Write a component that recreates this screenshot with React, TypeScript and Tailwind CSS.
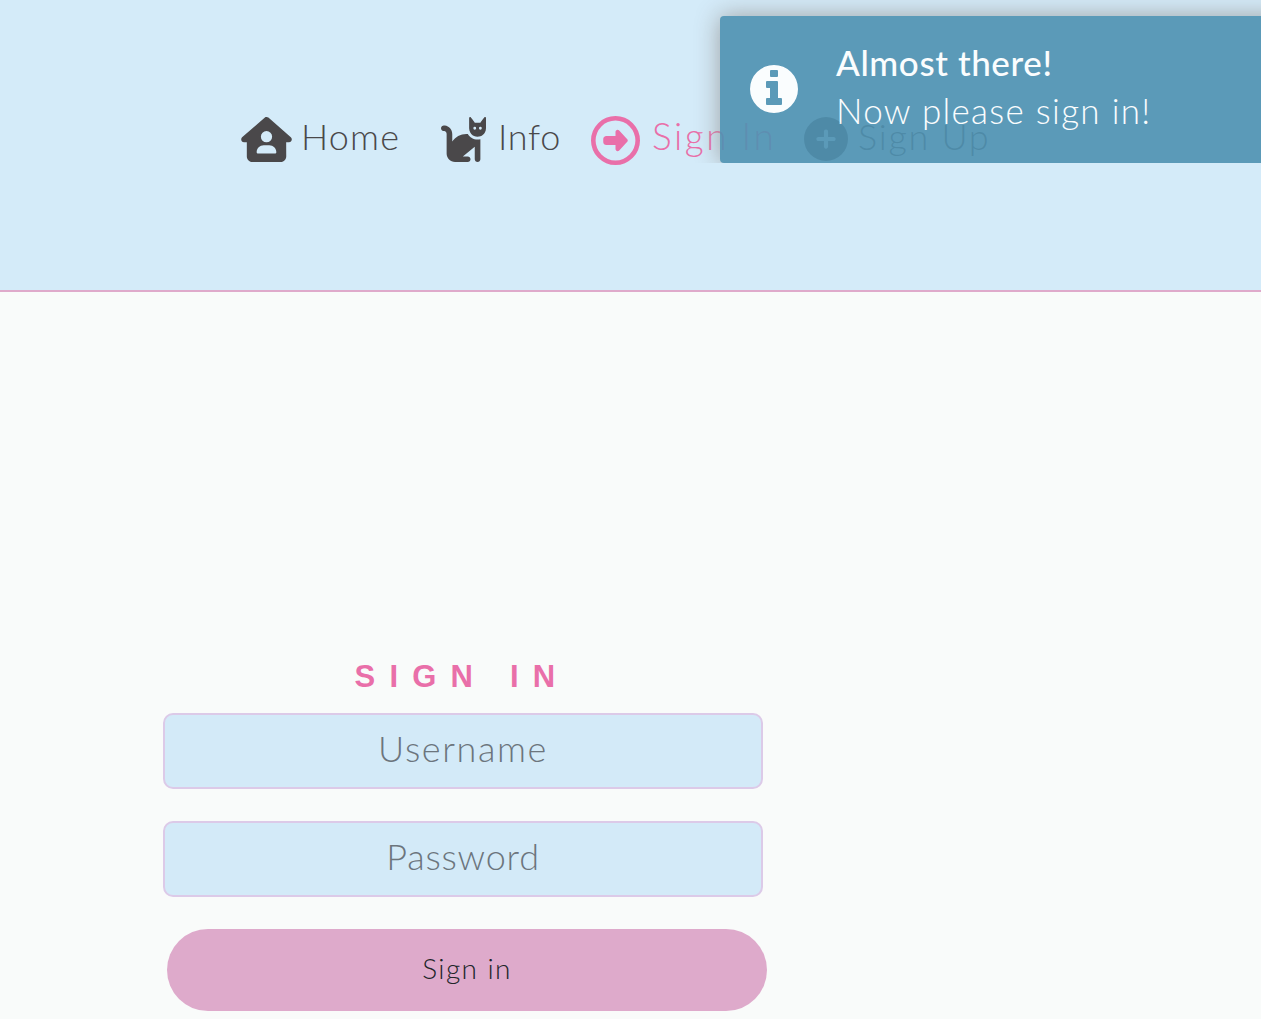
import { FaCat, FaCirclePlus, FaHouseUser, FaRegCircleRight } from "react-icons/fa6";

function InfoIcon({ className }: { className?: string }) {
  return (
    <svg viewBox="0 0 48 48" className={className} fill="currentColor">
      <path
        fillRule="evenodd"
        d="M24 0a24 24 0 1 0 0 48a24 24 0 1 0 0-48ZM21 5h6a1 1 0 0 1 1 1v5a1 1 0 0 1-1 1h-6a1 1 0 0 1-1-1v-5a1 1 0 0 1 1-1ZM17 16h10a1 1 0 0 1 1 1v16h3a1 1 0 0 1 1 1v5a1 1 0 0 1-1 1h-14a1 1 0 0 1-1-1v-5a1 1 0 0 1 1-1h3v-10h-3a1 1 0 0 1-1-1v-5a1 1 0 0 1 1-1Z"
      />
    </svg>
  );
}

function Header() {
  return (
    <header className="h-[292px] border-b-2 border-[#dfaacb] bg-[#d4ebf9] pl-[241px] pt-[115px]">
      <nav className="flex h-[50px] items-start whitespace-nowrap text-[36px] font-light leading-[42px] text-[#4a484a]">
        <a className="flex w-[197px]">
          <FaHouseUser className="mt-[2px] h-[45px] w-[51px] shrink-0" />
          <span className="ml-[9px] tracking-[1.2px]">Home</span>
        </a>
        <a className="flex w-[153px]">
          <FaCat className="mt-[2px] h-[45px] w-[51px] shrink-0" />
          <span className="ml-[9px] tracking-[0.7px]">Info</span>
        </a>
        <a className="flex w-[213px] text-[#e96fa9]">
          <FaRegCircleRight className="mt-[1px] h-[49px] w-[49px] shrink-0" />
          <span className="ml-[12px] text-[37px] tracking-[2.5px]">Sign In</span>
        </a>
        <a className="flex">
          <FaCirclePlus className="mt-[2px] h-[44px] w-[44px] shrink-0" />
          <span className="ml-[10px] tracking-[1.7px]">Sign Up</span>
        </a>
      </nav>
    </header>
  );
}

function Toast() {
  return (
    <div className="absolute inset-x-0 top-0 h-[163px] overflow-hidden">
      <div className="ml-[720px] mt-4 flex h-[147px] w-[600px] rounded-[4px] bg-[#4f92b2] pl-[30px] text-white opacity-90 shadow-[0_0_24px_#999]">
        <InfoIcon className="mt-[49px] h-12 w-12 shrink-0" />
        <div className="ml-[38px] mt-[22px] whitespace-nowrap text-[35px] leading-[48px]">
          <div className="font-medium tracking-[0.6px]">Almost there!</div>
          <div className="font-light tracking-[1.3px]">Now please sign in!</div>
        </div>
      </div>
    </div>
  );
}

const inputClass =
  "block h-[76px] w-[600px] rounded-[10px] border-2 border-[#dccae8] bg-[#d3eaf8] pb-1.5 text-center text-[36px] font-light text-[#6c757d] outline-none placeholder:text-[#6c757d] placeholder:opacity-100";

export default function App() {
  return (
    <div className="relative h-[1019px] w-[1261px] overflow-hidden bg-[#f9fbfa] font-['Lato',sans-serif]">
      <Header />
      <Toast />
      <form className="ml-[163px] mt-[367px] w-[604px]">
        <h1 className="h-[54px] w-[600px] whitespace-nowrap pl-[191.5px] font-['Liberation_Sans',sans-serif] text-[31px] font-bold leading-[35px] tracking-[14.2px] text-[#e96fa9]">
          SIGN IN
        </h1>
        <input className={`${inputClass} tracking-[1.6px]`} placeholder="Username" />
        <input className={`${inputClass} mt-8 tracking-[0.8px]`} type="password" placeholder="Password" />
        <button
          type="button"
          className="ml-1 mt-8 block h-[82px] w-[600px] rounded-full bg-[#deaacb] pb-1 text-[28px] font-light tracking-[1.4px] text-[#212529]"
        >
          Sign in
        </button>
      </form>
    </div>
  );
}
